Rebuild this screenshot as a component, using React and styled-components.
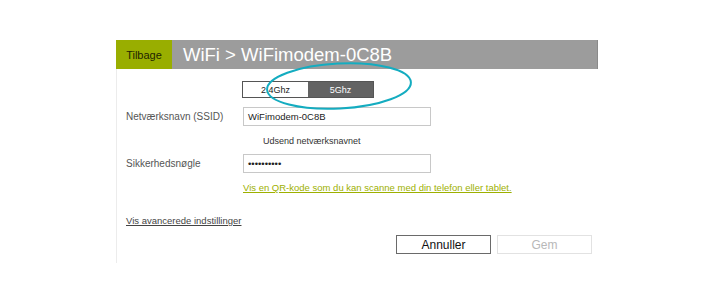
import React from "react";
import styled, { createGlobalStyle } from "styled-components";

const Global = createGlobalStyle`
  html, body { margin: 0; padding: 0; background: #fff; }
  body { font-family: "Liberation Sans", Arial, sans-serif; width: 720px; height: 300px; overflow: hidden; }
`;

const Page = styled.div`
  padding: 40px 0 0 116px;
`;

const Panel = styled.div`
  position: relative;
  width: 482px;
`;

const Header = styled.div`
  display: flex;
  align-items: stretch;
  height: 29px;
  background: #9c9c9c;
  border-right: 1px solid #8a8a8a;
`;

const Back = styled.div`
  width: 56px;
  background: #99ae00;
  color: #1f2400;
  font-size: 11px;
  display: flex;
  align-items: center;
  justify-content: center;
`;

const Title = styled.div`
  color: #fff;
  font-size: 18.5px;
  display: flex;
  align-items: center;
  padding-left: 11px;
`;

const Body = styled.div`
  border-left: 1px solid #ececec;
  height: 194px;
  padding: 12px 0 0 9px;
  box-sizing: border-box;
`;

const Toggle = styled.div`
  display: flex;
  margin-left: 116px;
  width: 132px;
  height: 17px;
  border: 1px solid #555;
  box-sizing: border-box;
`;

const ToggleOpt = styled.div`
  flex: 1;
  display: flex;
  align-items: center;
  justify-content: center;
  font-size: 9px;
  background: ${(p) => (p.$active ? "#636363" : "#fff")};
  color: ${(p) => (p.$active ? "#fff" : "#222")};
`;

const Form = styled.div`
  display: grid;
  grid-template-columns: 117px 188px;
  align-items: center;
  margin-top: 9px;
`;

const Label = styled.div`
  font-size: 10px;
  color: #555;
`;

const Input = styled.div`
  height: 19px;
  border: 1px solid #c8c8c8;
  box-sizing: border-box;
  font-size: 9.5px;
  color: #222;
  display: flex;
  align-items: center;
  padding-left: 4px;
`;

const Note = styled.div`
  grid-column: 2;
  font-size: 9px;
  color: #333;
  padding: 10px 0 8px 20px;
`;

const QrLink = styled.a`
  display: block;
  margin: 9px 0 0 117px;
  font-size: 9.5px;
  color: #9db000;
  text-decoration: underline;
  white-space: nowrap;
`;

const AdvLink = styled.a`
  display: block;
  margin-top: 22px;
  font-size: 9.5px;
  color: #444;
  text-decoration: underline;
`;

const Actions = styled.div`
  display: flex;
  gap: 6px;
  margin: 9px 0 0 270px;
`;

const Button = styled.div`
  width: 95px;
  height: 19px;
  box-sizing: border-box;
  border: 1px solid ${(p) => (p.$disabled ? "#e2e2e2" : "#6a6a6a")};
  color: ${(p) => (p.$disabled ? "#b8b8b8" : "#111")};
  font-size: 12px;
  display: flex;
  align-items: center;
  justify-content: center;
`;

const Circle = styled.svg`
  position: absolute;
  left: 148px;
  top: 20px;
  pointer-events: none;
`;

export default function App() {
  return (
    <>
      <Global />
      <Page>
        <Panel>
          <Header>
            <Back>Tilbage</Back>
            <Title>WiFi &gt; WiFimodem-0C8B</Title>
          </Header>
          <Body>
            <Toggle>
              <ToggleOpt>2.4Ghz</ToggleOpt>
              <ToggleOpt $active>5Ghz</ToggleOpt>
            </Toggle>
            <Form>
              <Label>Netværksnavn (SSID)</Label>
              <Input>WiFimodem-0C8B</Input>
              <Note>Udsend netværksnavnet</Note>
              <Label>Sikkerhedsnøgle</Label>
              <Input>••••••••••</Input>
            </Form>
            <QrLink>Vis en QR-kode som du kan scanne med din telefon eller tablet.</QrLink>
            <AdvLink>Vis avancerede indstillinger</AdvLink>
            <Actions>
              <Button>Annuller</Button>
              <Button $disabled>Gem</Button>
            </Actions>
          </Body>
          <Circle width="152" height="54" viewBox="0 0 152 54">
            <ellipse cx="75" cy="26" rx="72" ry="22.5" fill="none" stroke="#14acc0" strokeWidth="2" transform="rotate(-3 75 26)" />
          </Circle>
        </Panel>
      </Page>
    </>
  );
}
